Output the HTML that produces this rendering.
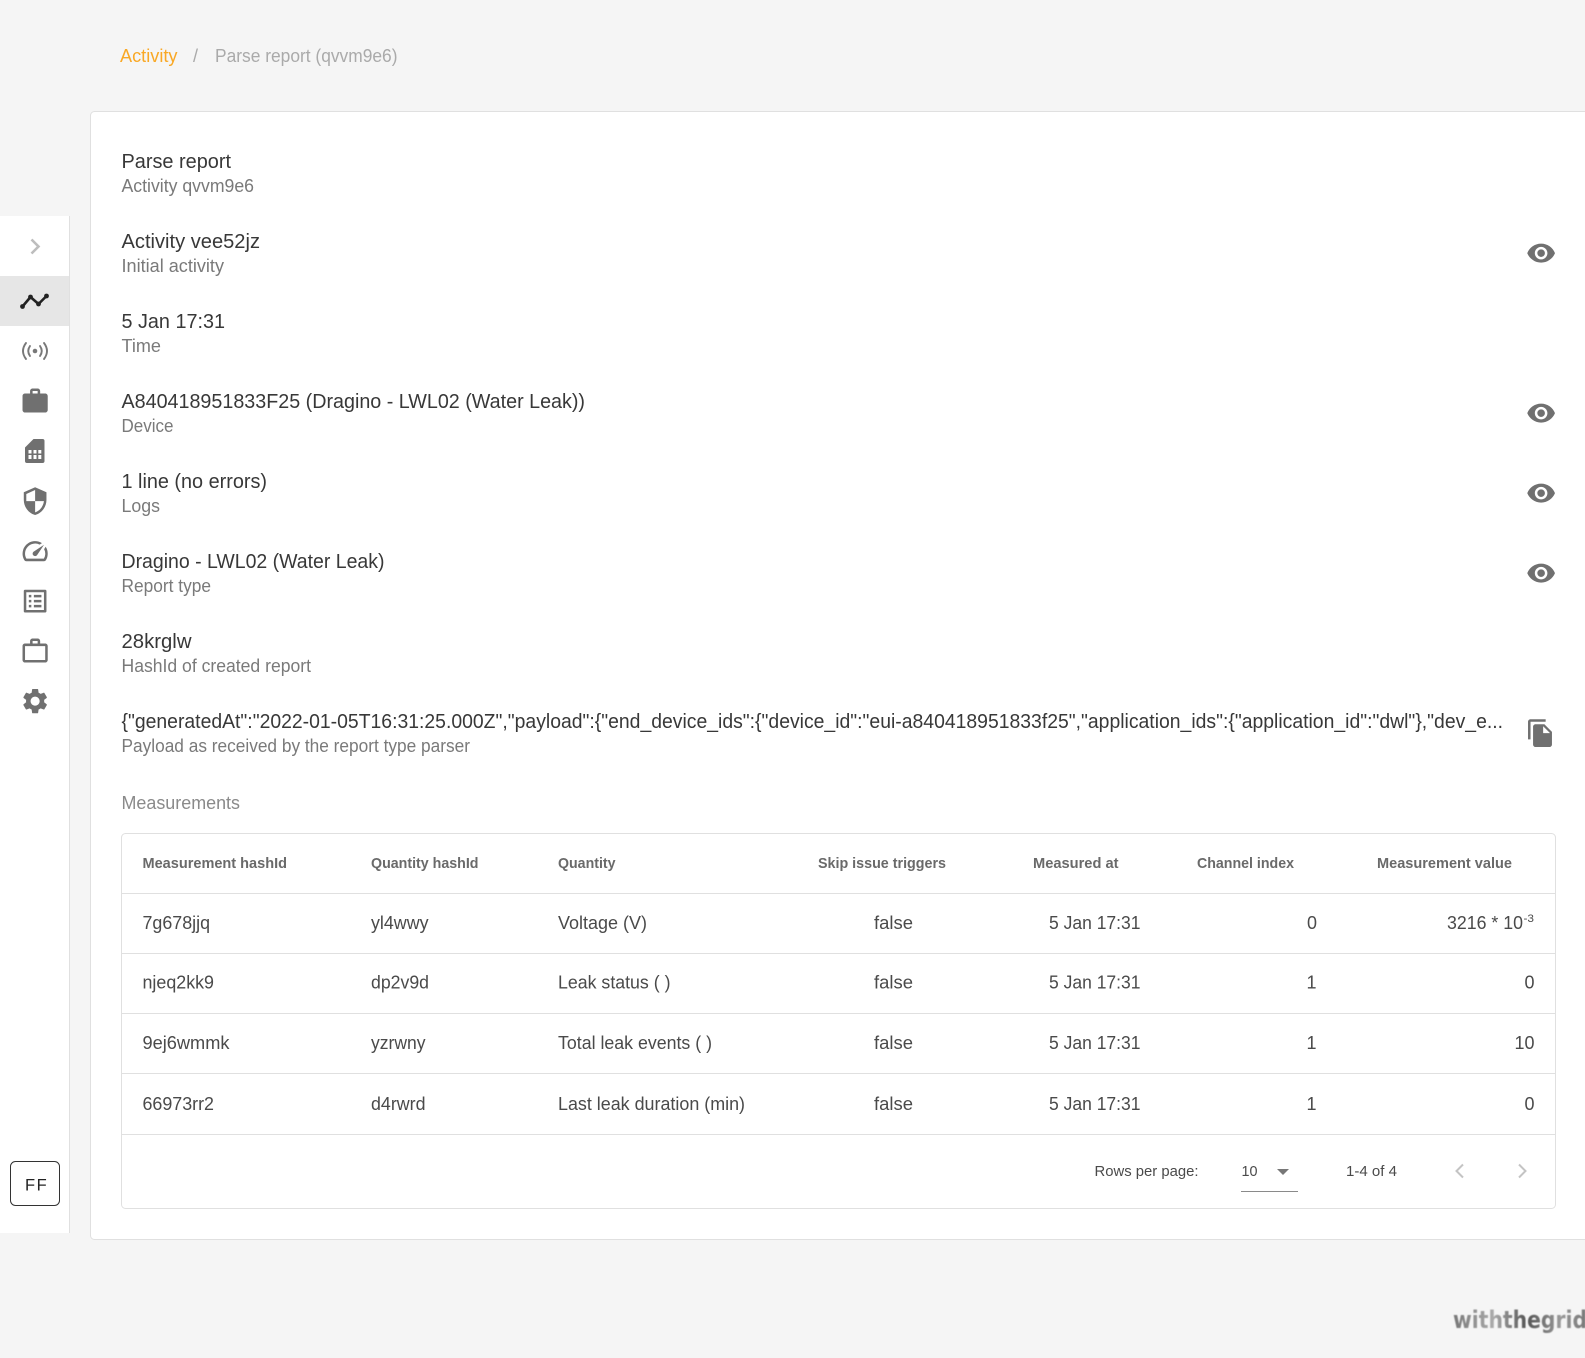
<!DOCTYPE html>
<html lang="en"><head><meta charset="utf-8"><title>Parse report</title>
<style>html,body{margin:0;padding:0;background:#f5f5f5;width:1585px;height:1358px;overflow:hidden}svg{display:block}
text{font-family:"Liberation Sans",sans-serif;white-space:pre}
.p{font-size:20px;fill:#383838}.s{font-size:18px;fill:#7a7a7a}.h{font-size:15px;font-weight:700;fill:#6a6a6a}.c{font-size:18px;fill:#4a4a4a}.g{font-size:15px;fill:#4a4a4a}
.i{fill:#707070}</style></head><body>
<svg width="1585" height="1358" viewBox="0 0 1585 1358" xmlns="http://www.w3.org/2000/svg">
<defs><linearGradient id="lg" x1="0" y1="0" x2="1" y2="0"><stop offset="0" stop-color="#777"/><stop offset=".3" stop-color="#aaa"/><stop offset=".55" stop-color="#555"/><stop offset=".8" stop-color="#999"/><stop offset="1" stop-color="#777"/></linearGradient>
<filter id="bl" x="-5%" y="-20%" width="110%" height="140%"><feGaussianBlur stdDeviation="0.5"/></filter></defs>
<rect width="1585" height="1358" fill="#f5f5f5"/>
<!-- sidebar -->
<rect x="0" y="216" width="70" height="1017" fill="#fff"/><rect x="69" y="216" width="1" height="1017" fill="#e0e0e0"/>
<rect x="0" y="276" width="69" height="50" fill="#e6e6e6"/>
<polyline points="31.5,239.5 38.5,246.5 31.5,253.5" fill="none" stroke="#bdbdbd" stroke-width="2.6"/>
<g fill="#222"><polyline points="22.5,306.5 30.5,297 38.5,304 46.5,296" fill="none" stroke="#222" stroke-width="2.6" stroke-linejoin="round"/><circle cx="22.5" cy="306.5" r="2.4"/><circle cx="30.5" cy="297" r="2.4"/><circle cx="38.5" cy="304" r="2.4"/><circle cx="46.5" cy="296" r="2.4"/></g>
<g fill="none" stroke="#787878" stroke-width="1.9" stroke-linecap="round"><path d="M26,343 Q20 351 26,359"/><path d="M44,343 Q50 351 44,359"/><path d="M30,346 Q26.5 351 30,356"/><path d="M40,346 Q43.5 351 40,356"/></g><circle cx="35" cy="351" r="2.3" fill="#787878"/>
<g transform="translate(20,386) scale(1.26)"><path class="i" d="M20 6h-4V4c0-1.11-.89-2-2-2h-4c-1.11 0-2 .89-2 2v2H4c-1.11 0-1.99.89-1.99 2L2 19c0 1.11.89 2 2 2h16c1.11 0 2-.89 2-2V8c0-1.11-.89-2-2-2zm-6 0h-4V4h4v2z"/></g>
<path class="i" d="M33.5,439 H42.5 a2,2 0 0 1 2,2 V461 a2,2 0 0 1 -2,2 H27 a2,2 0 0 1 -2,-2 V447.5 Z"/>
<g fill="#fff"><rect x="28.5" y="450" width="3" height="3.5"/><rect x="33.5" y="450" width="3" height="3.5"/><rect x="38.3" y="450" width="3" height="3.5"/><rect x="28.5" y="455" width="3" height="4"/><rect x="33.5" y="455" width="3" height="4"/><rect x="38.3" y="455" width="3" height="4"/></g>
<g transform="translate(20,486) scale(1.26)"><path class="i" d="M12 1L3 5v6c0 5.55 3.84 10.74 9 12 5.16-1.26 9-6.45 9-12V5l-9-4zm0 10.99h7c-.53 4.12-3.28 7.79-7 8.94V12H5V6.3l7-3.11v8.8z"/></g>
<g transform="translate(20,536) scale(1.26)"><path class="i" d="M20.38 8.57l-1.23 1.85a8 8 0 0 1-.22 7.58H5.07A8 8 0 0 1 15.58 6.85l1.85-1.23A10 10 0 0 0 3.35 19a2 2 0 0 0 1.72 1h13.85a2 2 0 0 0 1.74-1 10 10 0 0 0-.27-10.44zm-9.79 6.84a2 2 0 0 0 2.83 0l5.66-8.49-8.49 5.66a2 2 0 0 0 0 2.83z"/></g>
<g transform="translate(20,586) scale(1.26)"><path class="i" d="M19 5v14H5V5h14m1.1-2H3.9c-.5 0-.9.4-.9.9v16.2c0 .4.4.9.9.9h16.2c.4 0 .9-.5.9-.9V3.9c0-.5-.5-.9-.9-.9zM11 7h6v2h-6V7zm0 4h6v2h-6v-2zm0 4h6v2h-6zM7 7h2v2H7zm0 4h2v2H7zm0 4h2v2H7z"/></g>
<g transform="translate(20,636) scale(1.26)"><path class="i" d="M14 6V4h-4v2h4zM4 8v11h16V8H4zm16-2c1.11 0 2 .89 2 2v11c0 1.11-.89 2-2 2H4c-1.11 0-2-.89-2-2l.01-11c0-1.11.88-2 1.99-2h4V4c0-1.11.89-2 2-2h4c1.11 0 2 .89 2 2v2h4z"/></g>
<g transform="translate(20,686) scale(1.26)"><path class="i" d="M19.14 12.94c.04-.3.06-.61.06-.94 0-.32-.02-.64-.07-.94l2.03-1.58c.18-.14.23-.41.12-.61l-1.92-3.32c-.12-.22-.37-.29-.59-.22l-2.39.96c-.5-.38-1.03-.7-1.62-.94l-.36-2.54c-.04-.24-.24-.41-.48-.41h-3.84c-.24 0-.43.17-.47.41l-.36 2.54c-.59.24-1.13.57-1.62.94l-2.39-.96c-.22-.08-.47 0-.59.22L2.74 8.87c-.12.21-.08.47.12.61l2.03 1.58c-.05.3-.09.63-.09.94s.02.64.07.94l-2.03 1.58c-.18.14-.23.41-.12.61l1.92 3.32c.12.22.37.29.59.22l2.39-.96c.5.38 1.03.7 1.62.94l.36 2.54c.05.24.24.41.48.41h3.84c.24 0 .44-.17.47-.41l.36-2.54c.59-.24 1.13-.56 1.62-.94l2.39.96c.22.08.47 0 .59-.22l1.92-3.32c.12-.22.07-.47-.12-.61l-2.01-1.58zM12 15.6c-1.98 0-3.6-1.62-3.6-3.6s1.62-3.6 3.6-3.6 3.6 1.62 3.6 3.6-1.62 3.6-3.6 3.6z"/></g>
<rect x="10.5" y="1161.5" width="49" height="44" rx="5" fill="#fff" stroke="#333"/>
<text x="25" y="1190.5" font-size="16.5" fill="#222" letter-spacing="1.5">FF</text>
<!-- breadcrumb -->
<text x="120" y="62" font-size="18" fill="#f9a825" textLength="57.5" lengthAdjust="spacingAndGlyphs">Activity</text>
<text x="193" y="62" font-size="18" fill="#aaa">/</text>
<text x="215" y="62" font-size="18" fill="#aaa" textLength="182.5" lengthAdjust="spacingAndGlyphs">Parse report (qvvm9e6)</text>
<!-- card -->
<rect x="90.5" y="111.5" width="1520" height="1128" rx="4" fill="#fff" stroke="#e0e0e0"/>
<text class="p" x="121.5" y="168" textLength="109.5" lengthAdjust="spacingAndGlyphs">Parse report</text>
<text class="s" x="121.5" y="192" textLength="132.5" lengthAdjust="spacingAndGlyphs">Activity qvvm9e6</text>
<text class="p" x="121.5" y="248" textLength="138.5" lengthAdjust="spacingAndGlyphs">Activity vee52jz</text>
<text class="s" x="121.5" y="272" textLength="102.5" lengthAdjust="spacingAndGlyphs">Initial activity</text>
<text class="p" x="121.5" y="328" textLength="103.5" lengthAdjust="spacingAndGlyphs">5 Jan 17:31</text>
<text class="s" x="121.5" y="352" textLength="39.5" lengthAdjust="spacingAndGlyphs">Time</text>
<text class="p" x="121.5" y="408" textLength="463.5" lengthAdjust="spacingAndGlyphs">A840418951833F25 (Dragino - LWL02 (Water Leak))</text>
<text class="s" x="121.5" y="432" textLength="52" lengthAdjust="spacingAndGlyphs">Device</text>
<text class="p" x="121.5" y="488" textLength="145.5" lengthAdjust="spacingAndGlyphs">1 line (no errors)</text>
<text class="s" x="121.5" y="512" textLength="38.5" lengthAdjust="spacingAndGlyphs">Logs</text>
<text class="p" x="121.5" y="568" textLength="263" lengthAdjust="spacingAndGlyphs">Dragino - LWL02 (Water Leak)</text>
<text class="s" x="121.5" y="592" textLength="89.5" lengthAdjust="spacingAndGlyphs">Report type</text>
<text class="p" x="121.5" y="648" textLength="70" lengthAdjust="spacingAndGlyphs">28krglw</text>
<text class="s" x="121.5" y="672" textLength="189.5" lengthAdjust="spacingAndGlyphs">HashId of created report</text>
<text class="p" x="121.5" y="728" textLength="1381.5" lengthAdjust="spacingAndGlyphs">{"generatedAt":"2022-01-05T16:31:25.000Z","payload":{"end_device_ids":{"device_id":"eui-a840418951833f25","application_ids":{"application_id":"dwl"},"dev_e...</text>
<text class="s" x="121.5" y="752" textLength="348.5" lengthAdjust="spacingAndGlyphs">Payload as received by the report type parser</text>
<g transform="translate(1526,238) scale(1.26)"><path class="i" d="M12 4.5C7 4.5 2.73 7.61 1 12c1.73 4.39 6 7.5 11 7.5s9.27-3.11 11-7.5c-1.73-4.39-6-7.5-11-7.5zM12 17c-2.76 0-5-2.24-5-5s2.24-5 5-5 5 2.24 5 5-2.24 5-5 5zm0-8c-1.66 0-3 1.34-3 3s1.34 3 3 3 3-1.34 3-3-1.34-3-3-3z"/></g>
<g transform="translate(1526,398) scale(1.26)"><path class="i" d="M12 4.5C7 4.5 2.73 7.61 1 12c1.73 4.39 6 7.5 11 7.5s9.27-3.11 11-7.5c-1.73-4.39-6-7.5-11-7.5zM12 17c-2.76 0-5-2.24-5-5s2.24-5 5-5 5 2.24 5 5-2.24 5-5 5zm0-8c-1.66 0-3 1.34-3 3s1.34 3 3 3 3-1.34 3-3-1.34-3-3-3z"/></g>
<g transform="translate(1526,478) scale(1.26)"><path class="i" d="M12 4.5C7 4.5 2.73 7.61 1 12c1.73 4.39 6 7.5 11 7.5s9.27-3.11 11-7.5c-1.73-4.39-6-7.5-11-7.5zM12 17c-2.76 0-5-2.24-5-5s2.24-5 5-5 5 2.24 5 5-2.24 5-5 5zm0-8c-1.66 0-3 1.34-3 3s1.34 3 3 3 3-1.34 3-3-1.34-3-3-3z"/></g>
<g transform="translate(1526,558) scale(1.26)"><path class="i" d="M12 4.5C7 4.5 2.73 7.61 1 12c1.73 4.39 6 7.5 11 7.5s9.27-3.11 11-7.5c-1.73-4.39-6-7.5-11-7.5zM12 17c-2.76 0-5-2.24-5-5s2.24-5 5-5 5 2.24 5 5-2.24 5-5 5zm0-8c-1.66 0-3 1.34-3 3s1.34 3 3 3 3-1.34 3-3-1.34-3-3-3z"/></g>
<g transform="translate(1525.5,718) scale(1.26)"><path class="i" d="M16 1H4c-1.1 0-2 .9-2 2v14h2V3h12V1zm-1 4l6 6v10c0 1.1-.9 2-2 2H7.99C6.89 23 6 22.1 6 21l.01-14c0-1.1.89-2 1.99-2h7zm-1 7h5.5L14 6.5V12z"/></g>
<text x="121.5" y="809" font-size="18" fill="#8a8a8a" textLength="118.5" lengthAdjust="spacingAndGlyphs">Measurements</text>
<!-- table -->
<rect x="121.5" y="833.5" width="1434" height="375" rx="4" fill="#fff" stroke="#e0e0e0"/>
<g fill="#e0e0e0"><rect x="122" y="893" width="1433" height="1"/><rect x="122" y="953" width="1433" height="1"/><rect x="122" y="1013" width="1433" height="1"/><rect x="122" y="1073" width="1433" height="1"/><rect x="122" y="1134" width="1433" height="1"/></g>
<text class="h" x="142.5" y="868" textLength="144.5" lengthAdjust="spacingAndGlyphs">Measurement hashId</text>
<text class="h" x="371" y="868" textLength="107.5" lengthAdjust="spacingAndGlyphs">Quantity hashId</text>
<text class="h" x="558" y="868" textLength="57.5" lengthAdjust="spacingAndGlyphs">Quantity</text>
<text class="h" x="818" y="868" textLength="128" lengthAdjust="spacingAndGlyphs">Skip issue triggers</text>
<text class="h" x="1033" y="868" textLength="85.5" lengthAdjust="spacingAndGlyphs">Measured at</text>
<text class="h" x="1197" y="868" textLength="97" lengthAdjust="spacingAndGlyphs">Channel index</text>
<text class="h" x="1377" y="868" textLength="135" lengthAdjust="spacingAndGlyphs">Measurement value</text>

<text class="c" x="142.5" y="929" textLength="67.5" lengthAdjust="spacingAndGlyphs">7g678jjq</text>
<text class="c" x="371" y="929" textLength="57.5" lengthAdjust="spacingAndGlyphs">yl4wwy</text>
<text class="c" x="558" y="929" textLength="89" lengthAdjust="spacingAndGlyphs">Voltage (V)</text>
<text class="c" x="874" y="929" textLength="39" lengthAdjust="spacingAndGlyphs">false</text>
<text class="c" x="1049" y="929" textLength="91.5" lengthAdjust="spacingAndGlyphs">5 Jan 17:31</text>
<text class="c" x="1307" y="929" textLength="10" lengthAdjust="spacingAndGlyphs">0</text>
<text class="c" x="1447" y="929" textLength="76" lengthAdjust="spacingAndGlyphs">3216 * 10</text>
<text x="1523.5" y="922" font-size="11" fill="#4a4a4a" textLength="10.5" lengthAdjust="spacingAndGlyphs">-3</text>

<text class="c" x="142.5" y="988.5" textLength="71.5" lengthAdjust="spacingAndGlyphs">njeq2kk9</text>
<text class="c" x="371" y="988.5" textLength="58" lengthAdjust="spacingAndGlyphs">dp2v9d</text>
<text class="c" x="558" y="988.5" textLength="112.5" lengthAdjust="spacingAndGlyphs">Leak status ( )</text>
<text class="c" x="874" y="988.5" textLength="39" lengthAdjust="spacingAndGlyphs">false</text>
<text class="c" x="1049" y="988.5" textLength="91.5" lengthAdjust="spacingAndGlyphs">5 Jan 17:31</text>
<text class="c" x="1306.5" y="988.5">1</text>
<text class="c" x="1524.5" y="988.5" textLength="10" lengthAdjust="spacingAndGlyphs">0</text>

<text class="c" x="142.5" y="1049" textLength="87" lengthAdjust="spacingAndGlyphs">9ej6wmmk</text>
<text class="c" x="371" y="1049" textLength="54.5" lengthAdjust="spacingAndGlyphs">yzrwny</text>
<text class="c" x="558" y="1049" textLength="154" lengthAdjust="spacingAndGlyphs">Total leak events ( )</text>
<text class="c" x="874" y="1049" textLength="39" lengthAdjust="spacingAndGlyphs">false</text>
<text class="c" x="1049" y="1049" textLength="91.5" lengthAdjust="spacingAndGlyphs">5 Jan 17:31</text>
<text class="c" x="1306.5" y="1049">1</text>
<text class="c" x="1514.5" y="1049" textLength="20" lengthAdjust="spacingAndGlyphs">10</text>

<text class="c" x="142.5" y="1110" textLength="71.5" lengthAdjust="spacingAndGlyphs">66973rr2</text>
<text class="c" x="371" y="1110" textLength="54.5" lengthAdjust="spacingAndGlyphs">d4rwrd</text>
<text class="c" x="558" y="1110" textLength="187" lengthAdjust="spacingAndGlyphs">Last leak duration (min)</text>
<text class="c" x="874" y="1110" textLength="39" lengthAdjust="spacingAndGlyphs">false</text>
<text class="c" x="1049" y="1110" textLength="91.5" lengthAdjust="spacingAndGlyphs">5 Jan 17:31</text>
<text class="c" x="1306.5" y="1110">1</text>
<text class="c" x="1524.5" y="1110" textLength="10" lengthAdjust="spacingAndGlyphs">0</text>
<!-- pagination -->
<text class="g" x="1094.5" y="1176" textLength="104" lengthAdjust="spacingAndGlyphs">Rows per page:</text>
<text class="g" x="1241.5" y="1176" textLength="16" lengthAdjust="spacingAndGlyphs">10</text>
<polygon points="1277,1169 1289,1169 1283,1175" fill="#777"/>
<rect x="1241" y="1191" width="57" height="1" fill="#8a8a8a"/>
<text class="g" x="1346" y="1176" textLength="51" lengthAdjust="spacingAndGlyphs">1-4 of 4</text>
<polyline points="1463,1164.5 1456.5,1171 1463,1177.5" fill="none" stroke="#c4c4c4" stroke-width="2"/>
<polyline points="1519,1164.5 1525.5,1171 1519,1177.5" fill="none" stroke="#c4c4c4" stroke-width="2"/>
<!-- watermark -->
<text x="1453" y="1328" font-size="24" font-weight="700" fill="url(#lg)" textLength="134" lengthAdjust="spacingAndGlyphs" filter="url(#bl)" style="font-family:'DejaVu Sans',sans-serif">withthegrid</text>
</svg>
</body></html>
